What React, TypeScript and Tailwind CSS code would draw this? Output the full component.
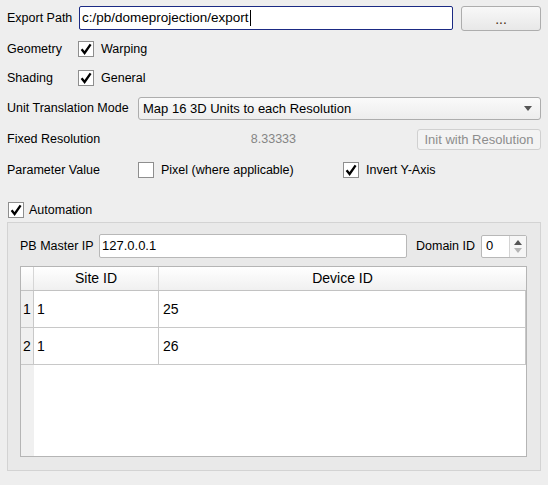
import React from 'react';

function Check({ checked }: { checked: boolean }) {
    return (
        <span className="flex h-[16px] w-[16px] shrink-0 items-center justify-center border border-[#8e8e8e] bg-white">
            {checked && (
                <svg width="12" height="12" viewBox="0 0 12 12">
                    <path d="M1.6 6.2 L4.6 10 L10.6 1.4" fill="none" stroke="#000" strokeWidth="2.3" strokeLinejoin="miter" />
                </svg>
            )}
        </span>
    );
}

const rows = [
    { n: '1', site: '1', device: '25' },
    { n: '2', site: '1', device: '26' },
];

export default function App() {
    return (
        <div className="flex h-[485px] w-[548px] flex-col bg-[#eeeeee] px-[7px] font-['Liberation_Sans',Arial,sans-serif] text-[12.5px] text-black">
            {/* Export path */}
            <div className="mt-[6px] flex h-[24px] items-center">
                <span className="w-[72px]">Export Path</span>
                <div className="flex h-[24px] flex-1 items-center rounded-[2px] border border-[#1b2a84] bg-white pl-[2px] text-[13.5px]">
                    c:/pb/domeprojection/export
                    <span className="ml-px h-[16px] w-px bg-black" />
                </div>
                <button className="ml-[8px] h-[25px] w-[80px] rounded-[3px] border border-[#adadad] bg-linear-to-b from-[#f8f8f8] to-[#e8e8e8] pt-[2px] text-[14px] text-[#4a2e12]">
                    ...
                </button>
            </div>

            {/* Geometry */}
            <div className="mt-[9px] flex h-[20px] items-center">
                <span className="w-[71px]">Geometry</span>
                <Check checked />
                <span className="ml-[7px]">Warping</span>
            </div>

            {/* Shading */}
            <div className="mt-[9px] flex h-[20px] items-center">
                <span className="w-[71px]">Shading</span>
                <Check checked />
                <span className="ml-[7px]">General</span>
            </div>

            {/* Unit translation */}
            <div className="mt-[9px] flex h-[23px] items-center">
                <span className="w-[131px]">Unit Translation Mode</span>
                <div className="flex h-[23px] flex-1 items-center justify-between rounded-[3px] border border-[#adadad] bg-linear-to-b from-[#fafafa] to-[#ededed] pl-[4px] pr-[8px] text-[13px]">
                    <span>Map 16 3D Units to each Resolution</span>
                    <svg width="8" height="5" viewBox="0 0 8 5">
                        <path d="M0 0 H8 L4 5 Z" fill="#555" />
                    </svg>
                </div>
            </div>

            {/* Fixed resolution */}
            <div className="mt-[9px] flex h-[21px] items-center">
                <span className="w-[131px]">Fixed Resolution</span>
                <span className="w-[158px] text-right text-[#858585]">8.33333</span>
                <div className="flex-1" />
                <button className="h-[21px] w-[124px] rounded-[3px] border border-[#d0d0d0] bg-[#f3f3f3] text-[13px] text-[#8d8d8d]">
                    Init with Resolution
                </button>
            </div>

            {/* Parameter value */}
            <div className="mt-[10px] flex h-[20px] items-center">
                <span className="w-[131px]">Parameter Value</span>
                <Check checked={false} />
                <span className="ml-[7px] w-[182px]">Pixel (where applicable)</span>
                <Check checked />
                <span className="ml-[7px]">Invert Y-Axis</span>
            </div>

            {/* Automation */}
            <div className="mt-[21px] flex h-[18px] items-center pl-px">
                <Check checked />
                <span className="ml-[5px]">Automation</span>
            </div>

            {/* Group box */}
            <div className="mt-[3px] flex h-[249px] flex-col border border-[#d3d3d3] bg-[#e9e9e9] pl-[12px] pr-[13px]">
                <div className="mt-[11px] flex h-[24px] items-center">
                    <span className="w-[79px]">PB Master IP</span>
                    <div className="flex h-[24px] flex-1 items-center rounded-[2px] border border-[#b8b8b8] bg-white pl-[2px] text-[13px]">
                        127.0.0.1
                    </div>
                    <span className="ml-[9px] w-[65px]">Domain ID</span>
                    <div className="flex h-[23px] w-[46px] items-stretch rounded-[2px] border border-[#b8b8b8] bg-white">
                        <span className="flex flex-1 items-center pl-[4px] text-[13px]">0</span>
                        <div className="flex w-[17px] flex-col items-center justify-center gap-[3px] border-l border-[#d4d4d4] bg-[#f6f6f6]">
                            <svg width="8" height="5" viewBox="0 0 8 5">
                                <path d="M0 5 H8 L4 0 Z" fill="#555" />
                            </svg>
                            <svg width="8" height="5" viewBox="0 0 8 5">
                                <path d="M0 0 H8 L4 5 Z" fill="#b5b5b5" />
                            </svg>
                        </div>
                    </div>
                </div>

                {/* Table */}
                <div className="mt-[8px] flex h-[191px] flex-col border border-[#b5b5b5] bg-white text-[14px]">
                    <div className="flex h-[24px] border-b border-[#c2c2c2] bg-linear-to-b from-[#ffffff] to-[#f0f0f0]">
                        <div className="w-[13px] border-r border-[#d6d6d6]" />
                        <div className="flex w-[125px] items-center justify-center border-r border-[#d6d6d6]">Site ID</div>
                        <div className="flex flex-1 items-center justify-center">Device ID</div>
                    </div>
                    {rows.map((r) => (
                        <div key={r.n} className="flex h-[37px] border-b border-[#c8c8c8]">
                            <div className="flex w-[13px] items-center justify-center border-r border-[#c8c8c8] bg-[#f0f0f0]">{r.n}</div>
                            <div className="flex w-[125px] items-center border-r border-[#c8c8c8] pl-[3px]">{r.site}</div>
                            <div className="flex flex-1 items-center border-r border-[#c8c8c8] pl-[4px]">{r.device}</div>
                        </div>
                    ))}
                    <div className="flex flex-1">
                        <div className="w-[13px] bg-[#f0f0f0]" />
                    </div>
                </div>
            </div>
        </div>
    );
}
